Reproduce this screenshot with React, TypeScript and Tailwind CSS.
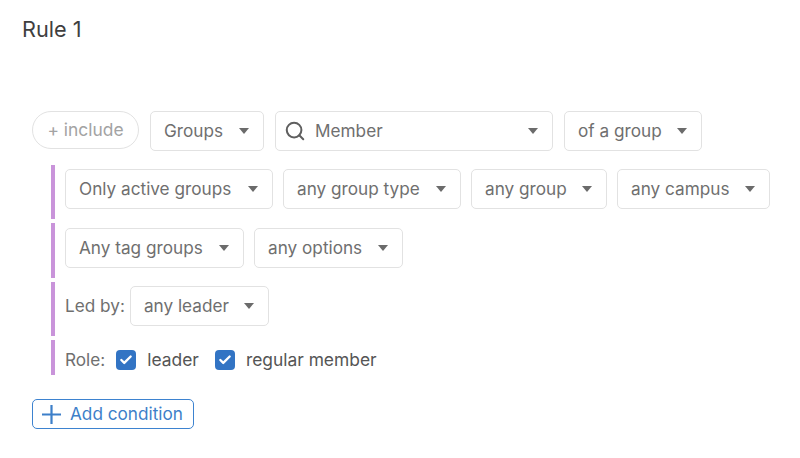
import { Check, Search } from "lucide-react"

function Caret() {
  return <span className="ml-auto h-0 w-0 border-x-[5.5px] border-t-[6px] border-x-transparent border-t-[#6b6b6b]" />
}

function Select({ label, width, search }: { label: string; width: string; search?: boolean }) {
  return (
    <div className={`flex h-[40px] shrink-0 items-center rounded-[5px] border border-[#e2e2e2] bg-white pr-[14px] text-[#6f6f6f] ${search ? "pl-[8px]" : "pl-[13px]"} ${width}`}>
      {search && <Search className="mr-[9px] h-[22px] w-[22px] text-[#5f5f5f]" strokeWidth={2.2} />}
      <span>{label}</span>
      <Caret />
    </div>
  )
}

function Condition({ children, className }: { children: React.ReactNode; className: string }) {
  return (
    <div className={`flex items-start border-l-[4px] border-[#c994da] pl-[10px] ${className}`}>
      {children}
    </div>
  )
}

function RoleCheck({ label, className }: { label: string; className?: string }) {
  return (
    <div className={`flex h-[20px] items-center gap-[11px] ${className ?? ""}`}>
      <span className="flex h-[20px] w-[20px] items-center justify-center rounded-[4px] bg-[#3274c4]">
        <Check className="h-[14px] w-[14px] text-white" strokeWidth={4} />
      </span>
      <span className="text-[17.4px] text-[#555555]">{label}</span>
    </div>
  )
}

export default function App() {
  return (
    <div className="h-[458px] w-[800px] overflow-hidden bg-white pl-[22px] font-['Inter',sans-serif] text-[17.2px]">
      <h1 className="pt-[15px] text-[21.7px] leading-[28px] text-[#3f3f3f]">Rule 1</h1>

      <div className="mt-[68px] pl-[10px]">
        {/* include row */}
        <div className="flex items-start gap-[11px]">
          <div className="flex h-[38px] w-[107px] items-center justify-center rounded-full border border-[#e2e2e2] text-[17.4px] text-[#a3a3a3]">
            + include
          </div>
          <Select label="Groups" width="w-[114px]" />
          <Select label="Member" width="w-[278px]" search />
          <Select label="of a group" width="w-[138px]" />
        </div>

        {/* conditions */}
        <div className="ml-[19px] mt-[14px] flex flex-col gap-[4px]">
          <Condition className="h-[54px] gap-[10px] pt-[4px]">
            <Select label="Only active groups" width="w-[208px]" />
            <Select label="any group type" width="w-[178px]" />
            <Select label="any group" width="w-[136px]" />
            <Select label="any campus" width="w-[153px]" />
          </Condition>
          <Condition className="h-[55px] gap-[10px] pt-[5px]">
            <Select label="Any tag groups" width="w-[179px]" />
            <Select label="any options" width="w-[149px]" />
          </Condition>
          <Condition className="h-[54px] gap-[5px] pt-[4px]">
            <span className="flex h-[40px] items-center text-[#6f6f6f]">Led by:</span>
            <Select label="any leader" width="w-[139px]" />
          </Condition>
          <Condition className="h-[35px] gap-[11px] pt-[10px]">
            <span className="flex h-[20px] items-center text-[#6f6f6f]">Role:</span>
            <RoleCheck label="leader" />
            <RoleCheck label="regular member" className="ml-[5px]" />
          </Condition>
        </div>

        <button className="mt-[24px] flex h-[30px] w-[162px] items-center gap-[9px] rounded-[5px] border border-[#3d83d0] pl-[9px] text-[#3d7fc9]">
          <svg viewBox="0 0 19 19" className="h-[19px] w-[19px]" fill="none" stroke="currentColor" strokeWidth="2.2">
            <path d="M9.5 0v19M0 9.5h19" />
          </svg>
          <span className="text-[17.2px]">Add condition</span>
        </button>
      </div>
    </div>
  )
}
